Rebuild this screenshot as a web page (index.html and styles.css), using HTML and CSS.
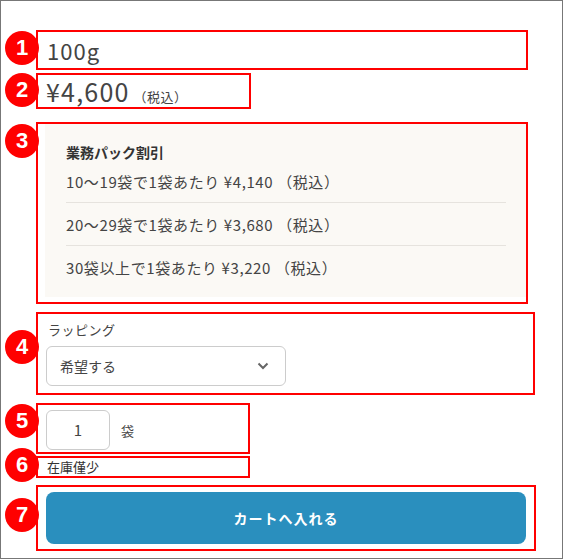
FILE: index.html
```html
<!DOCTYPE html>
<html lang="ja">
<head>
  <meta charset="UTF-8">
  <meta name="viewport" content="width=device-width, initial-scale=1">
  <title>商品詳細</title>
  <link rel="stylesheet" href="styles.css">
</head>
<body>

  <div class="frame">

    <!-- 1: name -->
    <div class="note note-name">
      <span class="badge b1">1</span>
      <div class="name">100g</div>
    </div>

    <!-- 2: price -->
    <div class="note note-price">
      <span class="badge b2">2</span>
      <span class="price">¥4,600</span>
      <span class="tax">（税込）</span>
    </div>

    <!-- 3: bulk discount -->
    <div class="note note-bulk">
      <span class="badge b3">3</span>
      <div class="bulk">
        <div class="bulk-title">業務パック割引</div>
        <ul class="bulk-list">
          <li>10〜19袋で1袋あたり ¥4,140 （税込）</li>
          <li>20〜29袋で1袋あたり ¥3,680 （税込）</li>
          <li>30袋以上で1袋あたり ¥3,220 （税込）</li>
        </ul>
      </div>
    </div>

    <!-- 4: wrapping -->
    <div class="note note-wrap">
      <span class="badge b4">4</span>
      <div class="wrap-label">ラッピング</div>
      <div class="select">
        <span>希望する</span>
        <svg class="chevron" width="12" height="8" viewBox="0 0 12 8">
          <path d="M1.5 1.5 L6 6 L10.5 1.5" fill="none" stroke="#666" stroke-width="2"/>
        </svg>
      </div>
    </div>

    <!-- 5: quantity -->
    <div class="note note-qty">
      <span class="badge b5">5</span>
      <div class="qty">1</div>
      <span class="unit">袋</span>
    </div>

    <!-- 6: stock -->
    <div class="note note-stock">
      <span class="badge b6">6</span>
      在庫僅少
    </div>

    <!-- 7: cart -->
    <div class="note note-cart">
      <span class="badge b7">7</span>
      <button class="cart-btn">カートへ入れる</button>
    </div>

  </div>

</body>
</html>
```

FILE: styles.css
```css
* {
  box-sizing: border-box;
}

body {
  margin: 0;
  font-family: "Noto Sans CJK JP", "Noto Sans", sans-serif;
  color: #444;
  background: #fff;
}

/* Outer frame */
.frame {
  width: 563px;
  height: 559px;
  border: 1px solid #777;
  padding: 29px 0 0 35px;
}

/* Red annotation boxes */
.note {
  position: relative;
  border: 2px solid #f00;
}

.badge {
  position: absolute;
  left: -33px;
  width: 34px;
  height: 34px;
  border-radius: 50%;
  background: #f00;
  color: #fff;
  font-family: "Liberation Sans", Arial, sans-serif;
  font-weight: 700;
  font-size: 22px;
  line-height: 34px;
  text-align: center;
  letter-spacing: 0;
}

.b1 { top: -1px; }
.b2 { top: -2px; }
.b3 { top: 0; }
.b4 { top: 16px; }
.b5 { top: -1px; }
.b6 { top: -10px; }
.b7 { top: 11px; }

/* 1 */
.note-name {
  width: 492px;
  height: 40px;
  padding-left: 9px;
  margin-bottom: 3px;
}

.name {
  font-size: 22px;
  line-height: 36px;
  letter-spacing: 1px;
}

/* 2 */
.note-price {
  width: 215px;
  height: 36px;
  padding-left: 8px;
  margin-bottom: 13px;
  display: flex;
  align-items: baseline;
}

.price {
  font-size: 25px;
  line-height: 32px;
  letter-spacing: 1.2px;
}

.tax {
  font-size: 13px;
  margin-left: 4px;
  letter-spacing: 0.5px;
}

/* 3 */
.note-bulk {
  width: 492px;
  height: 182px;
  padding: 0 0 5px 7px;
  margin-bottom: 8px;
}

.bulk {
  height: 100%;
  background: #fbf9f5;
  padding: 18px 20px 0 21px;
}

.bulk-title {
  font-size: 14px;
  font-weight: 700;
  line-height: 20px;
  color: #333;
}

.bulk-list {
  list-style: none;
  margin: 0;
  padding: 0;
}

.bulk-list li {
  font-size: 15px;
  line-height: 22px;
  letter-spacing: 0.6px;
  padding: 11px 0 9px;
  border-bottom: 1px solid #e6e3de;
}

.bulk-list li:first-child {
  padding-top: 9px;
}

.bulk-list li:last-child {
  border-bottom: none;
}

/* 4 */
.note-wrap {
  width: 499px;
  height: 83px;
  padding: 7px 8px 0;
  margin-bottom: 8px;
}

.wrap-label {
  font-size: 13px;
  line-height: 18px;
  padding-left: 2px;
  margin-bottom: 7px;
  letter-spacing: 0.5px;
}

.select {
  width: 240px;
  height: 40px;
  border: 1px solid #ccc;
  border-radius: 6px;
  display: flex;
  align-items: center;
  justify-content: space-between;
  padding: 0 16px 0 13px;
  font-size: 14px;
}

/* 5 */
.note-qty {
  width: 214px;
  height: 51px;
  padding: 5px 8px 0;
  margin-bottom: 2px;
  display: flex;
  align-items: flex-start;
  gap: 11px;
}

.qty {
  width: 64px;
  height: 40px;
  border: 1px solid #ccc;
  border-radius: 6px;
  text-align: center;
  font-size: 15px;
  line-height: 38px;
}

.unit {
  font-size: 13px;
  line-height: 42px;
}

/* 6 */
.note-stock {
  width: 214px;
  height: 22px;
  padding-left: 9px;
  margin-bottom: 7px;
  font-size: 13px;
  line-height: 18px;
  color: #333;
}

/* 7 */
.note-cart {
  width: 500px;
  height: 66px;
  padding: 5px 7px 5px 8px;
}

.cart-btn {
  display: block;
  width: 480px;
  height: 52px;
  border: none;
  border-radius: 8px;
  background: #2a8fbe;
  color: #fff;
  font-family: inherit;
  font-size: 14px;
  font-weight: 700;
  letter-spacing: 1px;
  cursor: pointer;
}
```
